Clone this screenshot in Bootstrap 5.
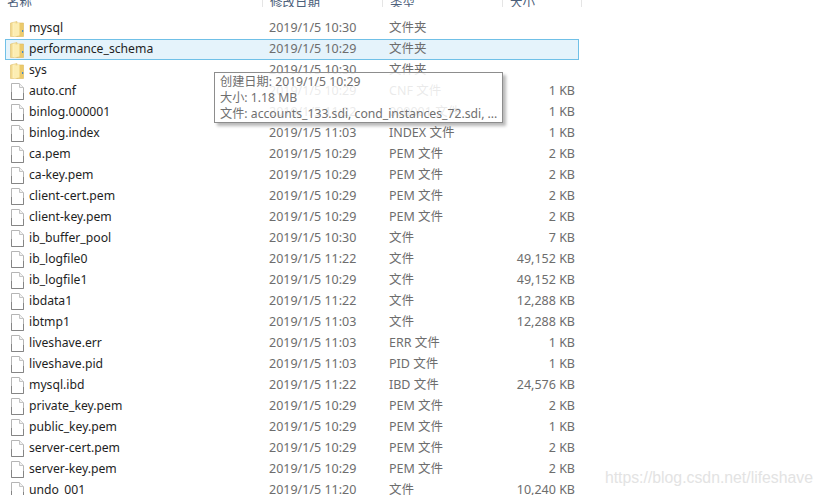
<!DOCTYPE html>
<html lang="en">
<head>
    <meta charset="UTF-8">
    <title>Explorer</title>
    <link href="https://cdn.jsdelivr.net/npm/bootstrap@5.3.0/dist/css/bootstrap.min.css" rel="stylesheet">
    <script src="https://cdn.jsdelivr.net/npm/bootstrap@5.3.0/dist/js/bootstrap.bundle.min.js"></script>
    <style>
        html, body {
            height: 100%;
            overflow: hidden;
            background: #fff;
        }
        body {
            font-family: "Noto Sans", "Noto Sans CJK SC", sans-serif;
            font-size: 12.5px;
            position: relative;
        }
        .head-row {
            height: 7px;
            width: 582px;
            overflow: hidden;
            color: #4c607a;
            align-items: flex-end;
        }
        .head-cell {
            height: 7px;
            line-height: 5px;
            border-right: 1px solid #e5e5e5;
            padding-left: 7px;
        }
        .file-list {
            margin-left: 5px;
            width: 574px;
            margin-top: 11px;
        }
        .file-row {
            height: 21px;
            line-height: 17px;
            border: 1px solid transparent;
            color: #6d6d6d;
        }
        .file-row.picked {
            background: #e5f3fb;
            border-color: #70c0e7;
        }
        .c-name {
            width: 263px;
            padding-left: 4px;
            color: #1e1e1e;
            gap: 5px;
            font-size: 12.2px;
        }
        .c-name span {
            padding-bottom: 2px;
        }
        .c-name svg {
            flex: none;
        }
        .c-date { width: 120px; }
        .c-type { width: 100px; }
        .c-size {
            width: 86px;
            text-align: right;
        }
        .tip-box {
            position: absolute;
            left: 214px;
            top: 72px;
            width: 289px;
            height: 51px;
            background: rgba(255, 255, 255, .86);
            border: 1px solid #8d8d8d;
            box-shadow: 3px 3px 3px rgba(0, 0, 0, .28);
            color: #6f6f6f;
            padding: 1px 5px;
            line-height: 16px;
            font-size: 12.2px;
            white-space: nowrap;
        }
        .mark-text {
            position: absolute;
            right: 10px;
            top: 466px;
            font-family: "Liberation Sans", sans-serif;
            font-size: 15.8px;
            color: #e3e3e3;
        }
    </style>
</head>
<body>
    <svg width="0" height="0" class="d-block">
        <defs>
            <linearGradient id="fold" x1="0" y1="0" x2="1" y2="0">
                <stop offset="0" stop-color="#eccd78"/>
                <stop offset=".5" stop-color="#fff3c0"/>
                <stop offset="1" stop-color="#f3d98a"/>
            </linearGradient>
            <symbol id="ico-folder" viewBox="0 0 14 16">
                <path d="M.5 2 L7 .5 L7 15.5 L.5 15.5 Z" fill="url(#fold)" stroke="#e0c272" stroke-width=".6"/>
                <path d="M7 2 L13.5 2 L13.5 15.5 L7 15.5 Z" fill="#ecca6c" stroke="#dcb95e" stroke-width=".6"/>
                <path d="M4 3 L9.5 1.5 L9.5 14.5 L4 15.5 Z" fill="#fcedb2"/>
                <rect x="12" y="9" width="1.2" height="2" fill="#3f87c9"/>
            </symbol>
            <symbol id="ico-doc" viewBox="-1 0 14 17">
                <path d="M.5 .5 H8.5 L12.5 4.5 V16.5 H.5 Z" fill="#fff" stroke="#b5b5b5"/>
                <path d="M8.5 .5 V4.5 H12.5" fill="#f2f2f2" stroke="#c4c4c4"/>
                <path d="M.5 9 V16.5 H12.5 V10" fill="none" stroke="#858585"/>
            </symbol>
        </defs>
    </svg>

    <div class="head-row d-flex">
        <div class="head-cell" style="width:263px">名称</div>
        <div class="head-cell" style="width:120px">修改日期</div>
        <div class="head-cell" style="width:120px">类型</div>
        <div class="head-cell" style="width:79px">大小</div>
    </div>

    <div class="file-list" id="fileList"></div>

    <div class="tip-box">
        <div>创建日期: 2019/1/5 10:29</div>
        <div>大小: 1.18 MB</div>
        <div>文件: accounts_133.sdi, cond_instances_72.sdi, ...</div>
    </div>

    <div class="mark-text">https://blog.csdn.net/lifeshave</div>

    <script>
        // name, date, type, size
        let files = [
            ["mysql", "10:30", "文件夹", ""],
            ["performance_schema", "10:29", "文件夹", ""],
            ["sys", "10:30", "文件夹", ""],
            ["auto.cnf", "10:29", "CNF 文件", "1 KB"],
            ["binlog.000001", "11:22", "000001 文件", "1 KB"],
            ["binlog.index", "11:03", "INDEX 文件", "1 KB"],
            ["ca.pem", "10:29", "PEM 文件", "2 KB"],
            ["ca-key.pem", "10:29", "PEM 文件", "2 KB"],
            ["client-cert.pem", "10:29", "PEM 文件", "2 KB"],
            ["client-key.pem", "10:29", "PEM 文件", "2 KB"],
            ["ib_buffer_pool", "10:30", "文件", "7 KB"],
            ["ib_logfile0", "11:22", "文件", "49,152 KB"],
            ["ib_logfile1", "10:29", "文件", "49,152 KB"],
            ["ibdata1", "11:22", "文件", "12,288 KB"],
            ["ibtmp1", "11:03", "文件", "12,288 KB"],
            ["liveshave.err", "11:03", "ERR 文件", "1 KB"],
            ["liveshave.pid", "11:03", "PID 文件", "1 KB"],
            ["mysql.ibd", "11:22", "IBD 文件", "24,576 KB"],
            ["private_key.pem", "10:29", "PEM 文件", "2 KB"],
            ["public_key.pem", "10:29", "PEM 文件", "1 KB"],
            ["server-cert.pem", "10:29", "PEM 文件", "2 KB"],
            ["server-key.pem", "10:29", "PEM 文件", "2 KB"],
            ["undo_001", "11:20", "文件", "10,240 KB"]
        ];

        let list = document.getElementById("fileList");
        files.forEach((f, i) => {
            let isFolder = f[3] === "";
            let icon = isFolder
                ? '<svg width="14" height="16"><use href="#ico-folder"/></svg>'
                : '<svg width="14" height="17"><use href="#ico-doc"/></svg>';
            let row = document.createElement("div");
            row.className = "file-row d-flex" + (i === 1 ? " picked" : "");
            row.innerHTML = `
                <div class="c-name d-flex align-items-center">${icon}<span>${f[0]}</span></div>
                <div class="c-date">2019/1/5 ${f[1]}</div>
                <div class="c-type">${f[2]}</div>
                <div class="c-size">${f[3]}</div>`;
            list.appendChild(row);
        });
    </script>
</body>
</html>
